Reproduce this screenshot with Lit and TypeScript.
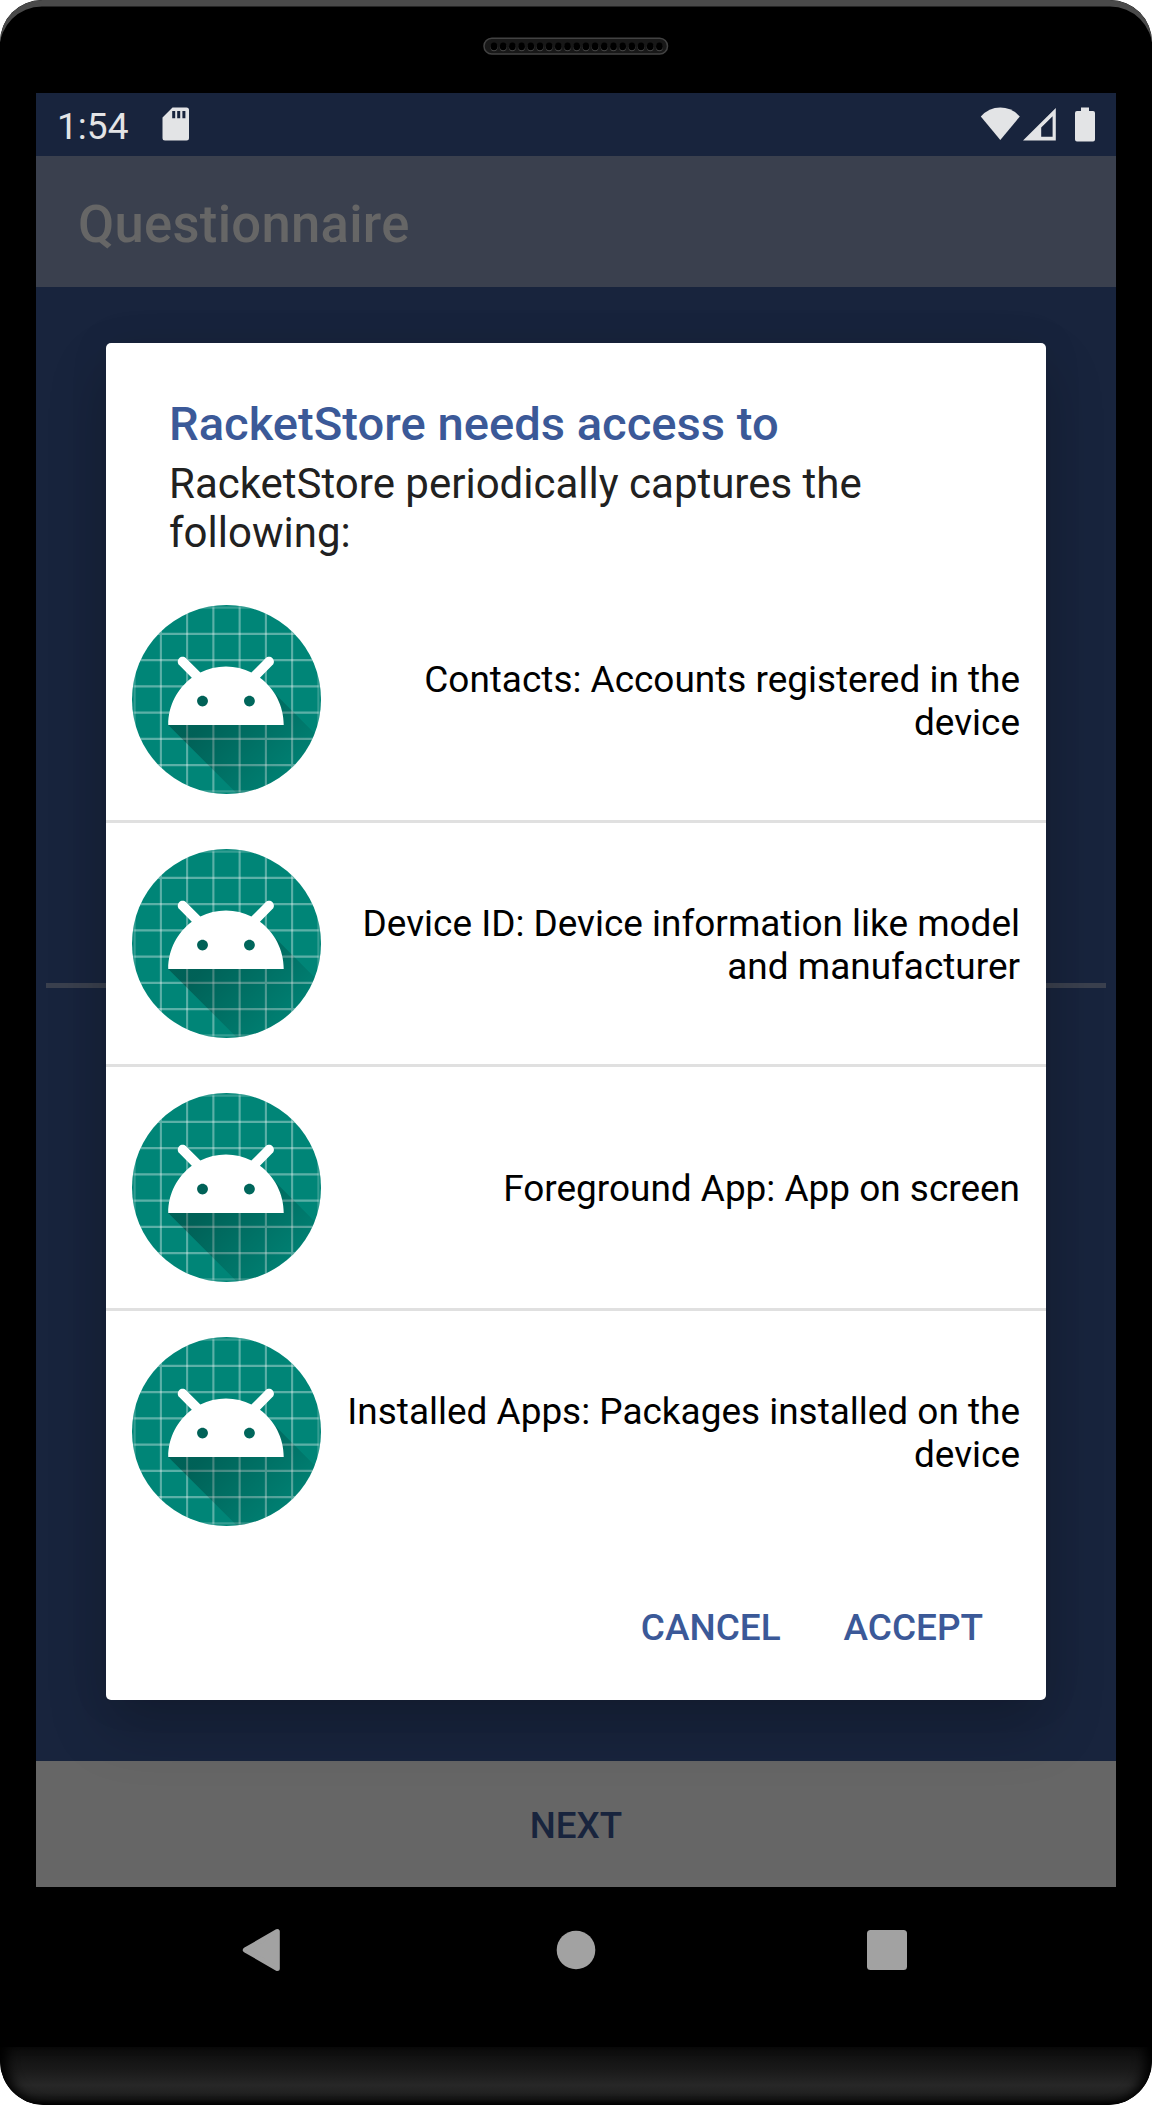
import { LitElement, html, css, svg } from "lit";
import { customElement, property } from "lit/decorators.js";

const GRID = [9, 19, 29, 39, 49, 59, 69, 79, 89, 99];
const INNER = GRID.slice(2, 8);
const HOLES = Array.from({ length: 19 }, (_, i) => 11 + i * 9.19);

@customElement("launcher-icon")
class LauncherIcon extends LitElement {
  static styles = css`
    :host { display: block; flex: none; width: 189px; height: 189px; }
    .art { display: block; width: 100%; height: 100%; }
  `;
  render() {
    return html`<svg class="art" viewBox="18 18 72 72" aria-hidden="true">
      <defs>
        <clipPath id="round"><circle cx="54" cy="54" r="36" /></clipPath>
        <linearGradient id="shade" gradientUnits="userSpaceOnUse" x1="48.7653" y1="61.0927" x2="78.5885" y2="90.9159">
          <stop offset="0" stop-color="#000" stop-opacity="0.267" />
          <stop offset="1" stop-color="#000" stop-opacity="0" />
        </linearGradient>
      </defs>
      <g clip-path="url(#round)">
        <rect x="18" y="18" width="72" height="72" fill="#008577" />
        <g stroke="#fff" stroke-opacity="0.2" stroke-width="0.8" fill="none">
          ${GRID.map((p) => svg`<path d="M${p},0V108M0,${p}H108" />`)}
          ${INNER.map((p) => svg`<path d="M${p},19V89M19,${p}H89" />`)}
        </g>
        <g transform="translate(-0.2 -0.3)">
          <path fill="url(#shade)" d="M32,64C32,64 38.39,52.99 44.13,50.95C51.37,48.37 70.14,49.57 70.14,49.57L108.26,87.69L108,109.01L75.97,107.97L32,64Z" />
          <path fill="#fff" d="M66.94,46.02L66.94,46.02C72.44,50.07 76,56.61 76,64L32,64C32,56.61 35.56,50.11 40.98,46.06L36.18,41.19C35.45,40.45 35.45,39.3 36.18,38.56C36.91,37.81 38.05,37.81 38.78,38.56L44.25,44.05C47.18,42.57 50.48,41.71 54,41.71C57.48,41.71 60.78,42.57 63.68,44.05L69.11,38.56C69.84,37.81 70.98,37.81 71.71,38.56C72.44,39.3 72.44,40.45 71.71,41.19L66.94,46.02ZM62.94,56.92C64.08,56.92 65,56.01 65,54.88C65,53.76 64.08,52.85 62.94,52.85C61.8,52.85 60.88,53.76 60.88,54.88C60.88,56.01 61.8,56.92 62.94,56.92ZM45.06,56.92C46.2,56.92 47.13,56.01 47.13,54.88C47.13,53.76 46.2,52.85 45.06,52.85C43.92,52.85 43,53.76 43,54.88C43,56.01 43.92,56.92 45.06,56.92Z" />
        </g>
      </g>
    </svg>`;
  }
}

@customElement("permission-row")
class PermissionRow extends LitElement {
  @property() text = "";
  static styles = css`
    :host { display: flex; align-items: center; height: 189px; padding: 26px; }
    .label {
      flex: 1; padding: 2px 0 0 20px; text-align: right; color: #000;
      font-size: 36.95px; line-height: 43px;
    }
  `;
  render() {
    return html`<launcher-icon></launcher-icon><div class="label">${this.text}</div>`;
  }
}

@customElement("app-root")
class AppRoot extends LitElement {
  permissions = [
    "Contacts: Accounts registered in the device",
    "Device ID: Device information like model and manufacturer",
    "Foreground App: App on screen",
    "Installed Apps: Packages installed on the device",
  ];

  static styles = css`
    :host { display: block; font-family: Roboto, "Liberation Sans", sans-serif; background: #fff; }
    .device {
      box-sizing: border-box; width: 1152px; height: 2105px; overflow: hidden;
      display: flex; flex-direction: column; background: #000;
      border-radius: 42px 42px 44px 44px;
    }
    .earpiece {
      flex: none; height: 93px; box-sizing: border-box; padding-top: 37px;
      display: flex; justify-content: center; align-items: flex-start;
      border-radius: 42px 42px 0 0;
      box-shadow: inset 0 7px 0 -0.5px #4a4a4a;
    }
    .screen {
      position: relative; flex: none; height: 1794px; margin: 0 36px;
      display: flex; flex-direction: column; background: #18243d; overflow: hidden;
    }
    .status {
      flex: none; height: 63px; box-sizing: border-box; padding: 0 20px 0 21px;
      display: flex; align-items: center; justify-content: space-between;
    }
    .side { display: flex; align-items: center; }
    .clock { font-size: 37.1px; line-height: 43px; color: #e3e4e6; padding-top: 3px; }
    .sd { margin: 0 0 1px 33px; }
    .signals { margin-bottom: 2px; }
    .bar {
      flex: none; height: 131px; box-sizing: border-box; padding: 4px 42px 0;
      display: flex; align-items: center; background: #3a404e;
      color: #666; font-size: 52.6px; letter-spacing: 0.28px; font-weight: 500;
    }
    .body { flex: 1; display: flex; align-items: center; padding: 0 10px; }
    .rule { flex: 1; height: 5px; margin-top: -78px; background: #3a404e; }
    .next {
      flex: none; height: 126px; box-sizing: border-box; padding-top: 2px;
      display: flex; align-items: center; justify-content: center;
      background: #666; color: #18243d; font-size: 36.75px; font-weight: 500;
    }
    .dialog {
      position: absolute; left: 70px; top: 250px; width: 940px; height: 1357px;
      display: flex; flex-direction: column; background: #fff; border-radius: 5px;
      box-shadow: 0 28px 60px rgba(0, 0, 0, 0.2), 0 0 40px rgba(0, 0, 0, 0.08);
    }
    .title {
      margin: 54px 63px 0; color: #3b5998;
      font-size: 47.15px; line-height: 55px; font-weight: 500; white-space: nowrap;
    }
    .message { margin: 7px 63px 0; color: #212121; font-size: 42px; line-height: 49px; }
    .list { margin-top: 22px; }
    .item + .item { border-top: 3px solid #e0e0e0; }
    .actions {
      display: flex; justify-content: flex-end; gap: 63px; padding: 54px 63px 0 0;
      color: #3b5998; font-size: 36.95px; line-height: 43px; font-weight: 500;
    }
    .nav {
      flex: none; height: 160px; display: flex; justify-content: center; align-items: flex-start;
    }
    .keys { display: block; }
    .chin {
      flex: 1; border-radius: 0 0 44px 44px;
      background: linear-gradient(#0c0c0c, #191919 38%, #272727 66%, #222 78%, #151515 90%, #000);
      box-shadow: inset 12px 0 12px -5px #000, inset -12px 0 12px -5px #000;
    }
  `;

  render() {
    return html`
      <div class="device">
        <div class="earpiece">
          <svg width="186" height="18" viewBox="0 0 186 18" aria-hidden="true">
            <rect x="1" y="1.3" width="183.5" height="15.7" rx="7.8" fill="#181818" stroke="#424242" stroke-width="1.5" />
            ${HOLES.map((x) => svg`<ellipse cx=${x} cy="10.2" rx="3.5" ry="4" fill="#484848" /><ellipse cx=${x} cy="9.4" rx="3.4" ry="3.8" fill="#000" />`)}
          </svg>
        </div>
        <div class="screen">
          <div class="status">
            <div class="side">
              <span class="clock">1:54</span>
              <svg class="sd" width="28" height="34" viewBox="0 0 28 34" aria-hidden="true">
                <path fill="#e3e4e6" fill-rule="evenodd" d="M10.5 .5H24.5Q27 .5 27 3V31Q27 33.5 24.5 33.5H3Q.5 33.5 .5 31V10.5ZM10.2 4V11.3H13.2V4ZM15.2 4V11.3H18.2V4ZM20.4 4V11.3H23.4V4Z" />
              </svg>
            </div>
            <svg class="signals" width="116" height="36" viewBox="0 0 116 36" aria-hidden="true">
              <g fill="#e3e4e6">
                <path d="M.8 10.5Q8.8 1.5 20.3 1.5T39.8 10.5L20.3 34Z" />
                <path fill-rule="evenodd" d="M43 34.5L75.8 2V34.5ZM61.2 21.5V30.8H72.6V10.3Z" />
                <path d="M101 1.5H109V5H113Q115 5 115 7V33.5Q115 35.5 113 35.5H97Q95 35.5 95 33.5V7Q95 5 97 5H101Z" />
              </g>
            </svg>
          </div>
          <div class="bar">Questionnaire</div>
          <div class="body"><div class="rule"></div></div>
          <div class="next">NEXT</div>
          <div class="dialog">
            <div class="title">RacketStore needs access to</div>
            <div class="message">RacketStore periodically captures the following:</div>
            <div class="list">
              ${this.permissions.map((p) => html`<permission-row class="item" .text=${p}></permission-row>`)}
            </div>
            <div class="actions"><span>CANCEL</span><span>ACCEPT</span></div>
          </div>
        </div>
        <div class="nav">
          <svg class="keys" width="1152" height="120" viewBox="0 0 1152 120" aria-hidden="true">
            <g fill="#a2a2a2">
              <path stroke="#a2a2a2" stroke-width="5" stroke-linejoin="round" d="M245.3 63L277.3 44.5V81.5Z" />
              <circle cx="576" cy="63" r="19.3" />
              <rect x="867" y="43" width="40" height="40" rx="3.5" />
            </g>
          </svg>
        </div>
        <div class="chin"></div>
      </div>
    `;
  }
}
